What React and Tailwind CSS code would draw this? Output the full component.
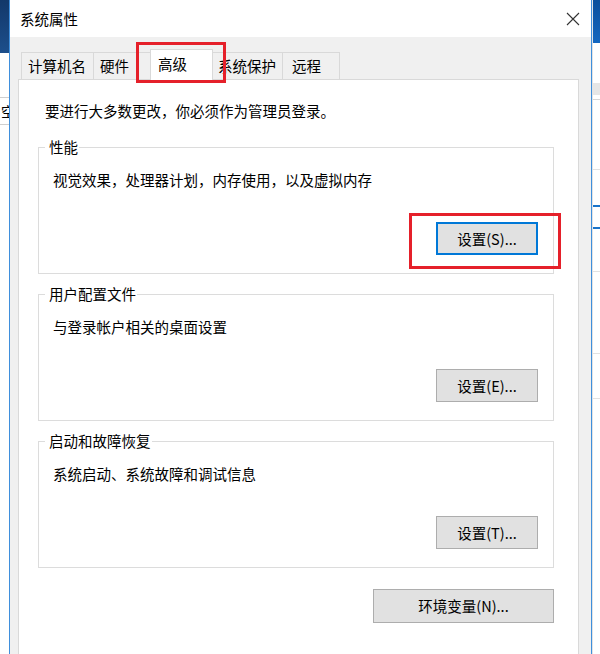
const tabs = [
    {label: "计算机名", cls: "w-[73px] pl-[6px]"},
    {label: "硬件", cls: "-ml-px w-[60px] pl-[6px]"},
    {label: "高级", cls: "-ml-[3px] w-[63px] pl-[7px]", active: true},
    {label: "系统保护", cls: "-ml-px w-[71px] pl-[5px]"},
    {label: "远程", cls: "-ml-px w-[58px] pl-[9px]"},
];

function WinButton({label, focused, className = ""}) {
    return (
        <button
            className={
                "flex items-center justify-center bg-[#e1e1e1] text-black " +
                (focused ? "border-2 border-[#0078d7] " : "border border-[#adadad] ") +
                className
            }
        >
            {label}
        </button>
    );
}

function GroupBox({title, text, button, focused, className = ""}) {
    return (
        <fieldset className={"w-[516px] border border-[#dcdcdc] p-0 " + className}>
            <legend className="ml-[6px] pl-[4px] pr-[1px] leading-[20px]">{title}</legend>
            <div className="pl-[14px] pr-[15px] pb-[18px]">
                <p className="mt-[13px] leading-[20px]">{text}</p>
                <div className="mt-[32px] flex justify-end">
                    <WinButton label={button} focused={focused} className="w-[102px] h-[33px]"/>
                </div>
            </div>
        </fieldset>
    );
}

export default function App() {
    return (
        <div className="relative w-[600px] h-[654px] overflow-hidden flex bg-white text-[14.5px] text-black font-['Noto_Sans_CJK_SC',sans-serif]">

            {/* -- window behind, left edge ------------------------------------------ */}
            <div className="w-[9px] flex flex-col shrink-0">
                <div className="h-[53px] bg-gradient-to-b from-[#12386a] to-[#1d4f8c]"/>
                <div className="h-[44px]"/>
                <div className="h-[28px] border-y border-[#cfcfcf] overflow-hidden flex items-center justify-end">
                    <span className="text-[14px] leading-none -mr-[6px]">空</span>
                </div>
                <div className="flex-1"/>
            </div>

            {/* -- dialog ---------------------------------------------------------------- */}
            <div className="w-[583px] shrink-0 flex flex-col border-x border-[#3f8fdc]">
                <div className="h-[37px] bg-white flex items-center justify-between pl-[10px] pr-[11px]">
                    <span className="leading-[20px]">系统属性</span>
                    <svg width="14" height="14" viewBox="0 0 14 14" className="text-[#333]">
                        <path d="M1 1 L13 13 M13 1 L1 13" stroke="currentColor" strokeWidth="1.1" fill="none"/>
                    </svg>
                </div>

                <div className="flex-1 bg-[#f0f0f0] pt-[12px] flex flex-col">
                    <div className="h-[30px] ml-[11px] flex items-end">
                        {tabs.map(tab => (
                            <div
                                key={tab.label}
                                className={
                                    "flex items-center border-t border-x border-[#d9d9d9] " +
                                    (tab.active
                                        ? "relative z-10 h-[31px] -mb-px bg-white pb-[3px] "
                                        : "h-[27px] bg-[#f0f0f0] ") +
                                    tab.cls
                                }
                            >
                                <span className="leading-[20px] whitespace-nowrap">{tab.label}</span>
                            </div>
                        ))}
                    </div>

                    <div className="ml-[8px] w-[561px] flex-1 bg-white border border-b-0 border-[#d9d9d9] pt-[21px] pl-[19px]">
                        <p className="ml-[7px] leading-[20px]">要进行大多数更改，你必须作为管理员登录。</p>

                        <GroupBox
                            className="mt-[16px]"
                            title="性能"
                            text="视觉效果，处理器计划，内存使用，以及虚拟内存"
                            button="设置(S)..."
                            focused
                        />
                        <GroupBox
                            className="mt-[10px]"
                            title="用户配置文件"
                            text="与登录帐户相关的桌面设置"
                            button="设置(E)..."
                        />
                        <GroupBox
                            className="mt-[10px]"
                            title="启动和故障恢复"
                            text="系统启动、系统故障和调试信息"
                            button="设置(T)..."
                        />

                        <div className="w-[516px] mt-[21px] flex justify-end">
                            <WinButton label="环境变量(N)..." className="w-[181px] h-[34px]"/>
                        </div>
                    </div>
                </div>
            </div>

            {/* -- window behind, right edge ---------------------------------------- */}
            <div className="w-[8px] shrink-0 flex flex-col border-l border-[#e3e3e3]">
                <div className="h-[43px] bg-gradient-to-b from-[#0a4f9c] to-[#1467c0]"/>
                <div className="h-[40px]"/>
                <div className="h-[12px] bg-[#e6e6e6]"/>
                <div className="h-[5px] border-b border-[#d6d6d6]"/>
                <div className="h-[70px] border-b border-[#e2e2e2]"/>
                <div className="h-[37px] border-b-2 border-[#1a73c9]"/>
                <div className="h-[22px] border-b-2 border-[#1a73c9]"/>
                <div className="h-[43px] border-b border-[#e2e2e2]"/>
                <div className="h-[82px] border-b border-[#e2e2e2]"/>
                <div className="h-[45px] border-b border-[#e2e2e2]"/>
                <div className="flex-1"/>
            </div>

            {/* -- red annotation marks ------------------------------------------- */}
            <div className="absolute left-[136px] top-[42px] w-[90px] h-[41px] border-[3px] border-[#e5202a] z-20"/>
            <div className="absolute left-[409px] top-[213px] w-[152px] h-[56px] border-[3px] border-[#e5202a] z-20"/>
        </div>
    );
}
